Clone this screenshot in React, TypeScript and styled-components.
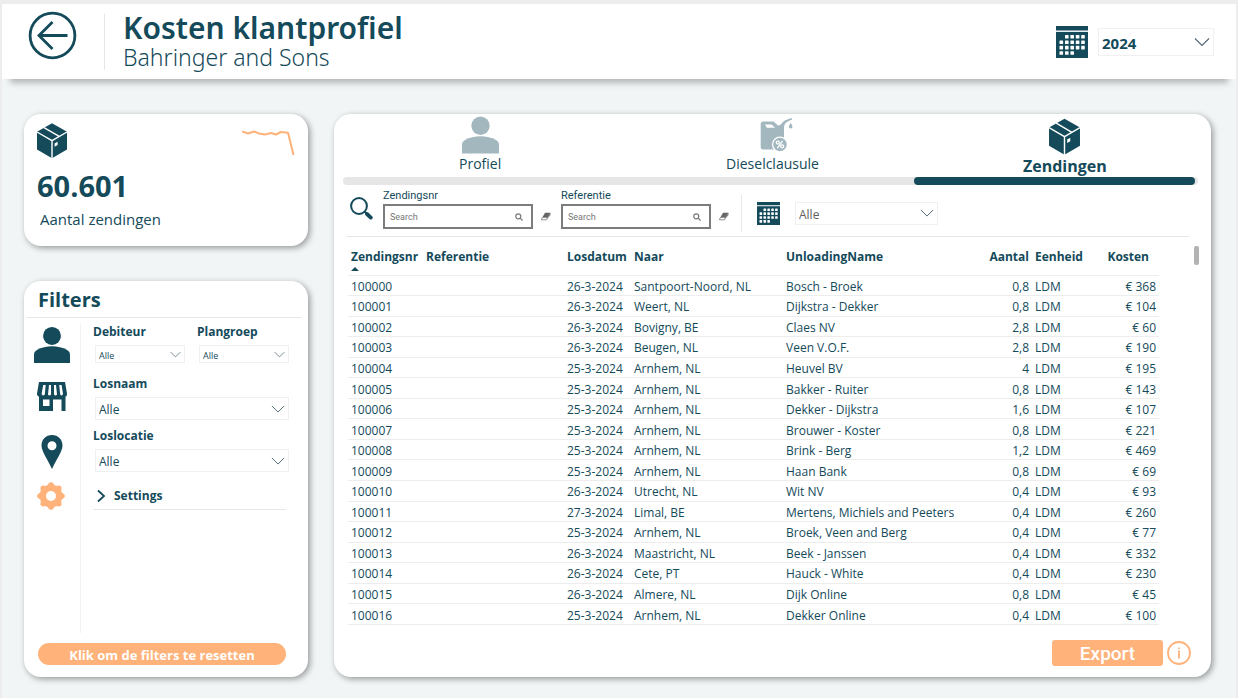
import React from "react";
import styled, { createGlobalStyle, css } from "styled-components";

const ink = "#144a5a";
const peach = "#ffb27a";
const muted = "#a3b7bf";
const line = "#e6e6e6";

const GlobalStyle = createGlobalStyle`
  *, *::before, *::after { box-sizing: border-box; }
  body {
    margin: 0;
    background: #f1f5f6;
    color: ${ink};
    font-family: "Open Sans", "Noto Sans", sans-serif;
    font-size: 12px;
  }
  button, input, select { font: inherit; color: inherit; }
  button { cursor: pointer; border: 0; padding: 0; background: none; }
  svg { display: block; flex: none; }
  h1, h2, p { margin: 0; }
`;

const Page = styled.div`
  min-height: 100vh;
  border: solid #ededed;
  border-width: 4px 2px 0;
`;

const Header = styled.header`
  display: flex;
  align-items: center;
  height: 75px;
  padding: 0 22px 0 26px;
  background: #fff;
  box-shadow: 0 12px 6px -8px rgba(0, 0, 0, 0.25);
`;

const BackButton = styled.button`
  align-self: flex-start;
  margin-top: 7px;
`;

const HeaderRule = styled.div`
  width: 1px;
  height: 56px;
  margin: 0 18px 0 27px;
  background: ${line};
`;

const Titles = styled.div`
  flex: 1;
  align-self: flex-start;
  padding-top: 6px;
`;

const Title = styled.h1`
  font-family: "Noto Sans", sans-serif;
  font-size: 30px;
  font-weight: 600;
  line-height: 36px;
`;

const Subtitle = styled.p`
  font-family: "Noto Sans", sans-serif;
  font-size: 23px;
  font-weight: 300;
  line-height: 22px;
`;

const YearPicker = styled.div`
  display: flex;
  align-items: center;
  gap: 10px;
`;

const SelectBox = styled.div<{ $w?: number; $h: number }>`
  display: grid;
  align-items: center;
  width: ${(p) => (p.$w ? `${p.$w}px` : "auto")};
  height: ${(p) => p.$h}px;
  border: 1px solid #f0f0f0;
  background: #fff;

  > * { grid-area: 1 / 1; }
  > svg { justify-self: end; margin-right: 3px; pointer-events: none; }
`;

const NativeSelect = styled.select<{ $size: number; $bold?: boolean; $grey?: boolean }>`
  appearance: none;
  width: 100%;
  height: 100%;
  border: 0;
  background: transparent;
  padding: 2px 20px 0 3px;
  font-size: ${(p) => p.$size}px;
  font-weight: ${(p) => (p.$bold ? 700 : 400)};
  ${(p) => p.$grey && css`color: #605e5c;`}
`;

const Main = styled.main`
  display: grid;
  grid-template-columns: 284px minmax(0, 1fr);
  column-gap: 26px;
  padding: 35px 25px 21px 22px;
`;

const Sidebar = styled.div`
  display: flex;
  flex-direction: column;
  gap: 35px;
`;

const Card = styled.section`
  border-radius: 17px;
  background: #fff;
  box-shadow: 2px 2px 6px rgba(0, 0, 0, 0.38);
`;

const KpiCard = styled(Card)`
  padding: 9px 12px 16px;
`;

const KpiTop = styled.div`
  display: flex;
  justify-content: space-between;
`;

const KpiValue = styled.p`
  margin-top: 8px;
  padding-left: 1px;
  font-size: 29px;
  font-weight: 700;
  line-height: 38px;
`;

const KpiLabel = styled.p`
  padding: 4px 4px 1px;
  font-size: 15px;
  line-height: 20px;
`;

const FilterCard = styled(Card)`
  display: flex;
  flex-direction: column;
  flex: 1;
  padding-bottom: 12px;
`;

const FilterTitle = styled.h2`
  margin: 0 7px 0 3px;
  padding: 6px 11px 4px;
  border-bottom: 1px solid ${line};
  font-size: 20px;
  font-weight: 700;
  line-height: 26px;
`;

const FilterBody = styled.div`
  display: flex;
  flex: 1;
  margin-top: 6px;
`;

const IconRail = styled.div`
  display: flex;
  flex-direction: column;
  align-items: center;
  width: 57px;
  padding-top: 3px;
  border-right: 1px solid #f2f2f2;
`;

const RailSlot = styled.div<{ $h: number }>`
  display: flex;
  align-items: flex-start;
  height: ${(p) => p.$h}px;
`;

const Fields = styled.div`
  flex: 1;
  padding: 0 19px 0 12px;
`;

const FieldRow = styled.div`
  display: grid;
  grid-template-columns: 1fr 1fr;
  column-gap: 12px;
`;

const Field = styled.div`
  height: 52px;

  label {
    display: block;
    font-weight: 700;
    line-height: 16px;
  }
  > div { margin: 5px 0 0 2px; }
`;

const SettingsToggle = styled.button`
  display: flex;
  align-items: center;
  gap: 8px;
  width: 100%;
  height: 30px;
  padding: 2px 0 0 4px;
  border-bottom: 1px solid ${line};
  font-weight: 700;
`;

const SettingsWrap = styled.div`
  padding-right: 3px;
`;

const ResetButton = styled.button`
  height: 22px;
  margin: 10px 22px 0 14px;
  padding-top: 1px;
  border-radius: 11px;
  background: ${peach};
  color: #fff;
  font-size: 13px;
  font-weight: 700;
`;

const Panel = styled(Card)`
  display: flex;
  flex-direction: column;
  padding-bottom: 11px;
`;

const Tabs = styled.nav`
  display: grid;
  grid-template-columns: repeat(3, 1fr);
  height: 63px;
`;

const Tab = styled.button<{ $active?: boolean }>`
  display: flex;
  flex-direction: column;
  align-items: center;
  padding-top: ${(p) => (p.$active ? 4 : 2)}px;
  line-height: 20px;
  font-size: ${(p) => (p.$active ? 16 : 14)}px;
  font-weight: ${(p) => (p.$active ? 700 : 400)};

  svg { height: 38px; }
`;

const Track = styled.div`
  height: 8px;
  margin: 0 13px 0 9px;
  padding-right: 3px;
  border-radius: 4px;
  background: ${line};
`;

const TrackThumb = styled.div`
  width: 33%;
  height: 8px;
  margin-left: auto;
  border-radius: 4px;
  background: ${ink};
`;

const SearchBar = styled.div`
  display: flex;
  align-items: center;
  height: 52px;
  margin: 0 22px 0 12px;
  padding: 5px 0 0 4px;
  border-bottom: 1px solid ${line};
`;

const SearchGroup = styled.div`
  display: flex;
  align-items: center;
  gap: 10px;
  padding-bottom: 10px;
`;

const SearchField = styled.div`
  display: flex;
  flex-direction: column;
  font-family: Roboto, sans-serif;

  label { font-size: 11px; line-height: 17px; }
`;

const InputRow = styled.div`
  display: flex;
  align-items: center;
  gap: 8px;
`;

const InputBox = styled.div`
  display: flex;
  align-items: center;
  width: 150px;
  height: 25px;
  padding: 0 8px 0 5px;
  border: 2px solid #7c7c7c;

  input {
    flex: 1;
    min-width: 0;
    padding: 0;
    border: 0;
    outline: 0;
    font-size: 9px;
  }
  input::placeholder { color: #777; }
`;

const BarRule = styled.div`
  width: 1px;
  height: 37px;
  margin: 0 15px 0 12px;
  background: ${line};
`;

const DateSelect = styled.div`
  margin-left: 15px;
`;

const TableArea = styled.div`
  display: flex;
  flex: 1;
  padding-left: 14px;
`;

const Table = styled.table`
  flex: 1;
  width: 100%;
  height: 388px;
  table-layout: fixed;
  border-collapse: collapse;

  th, td {
    padding: 0 3px;
    border-bottom: 1px solid #ededed;
    text-align: left;
    white-space: nowrap;
  }
  thead tr { height: 38px; }
  th { font-weight: 700; line-height: 16px; vertical-align: top; padding-top: 12px; }
  td { line-height: 17px; font-weight: 400; padding-top: 2px; }
`;

const NumHead = styled.th`
  && { text-align: right; }
`;

const CostHead = styled.th`
  && { text-align: right; padding-right: 10px; }
`;

const NumCell = styled.td`
  && { text-align: right; }
`;

const Gutter = styled.div`
  width: 52px;
  padding: 9px 0 0 35px;
`;

const ScrollThumb = styled.div`
  width: 5px;
  height: 19px;
  border-radius: 2px;
  background: #b3b3b3;
`;

const SortMark = styled.div`
  width: 0;
  height: 0;
  margin-top: 2px;
  border: solid transparent;
  border-width: 0 4px 4px;
  border-bottom-color: ${ink};
`;

const Footer = styled.div`
  display: flex;
  align-items: center;
  justify-content: flex-end;
  gap: 4px;
  margin-top: 15px;
  padding-right: 20px;
`;

const ExportButton = styled.button`
  width: 111px;
  height: 26px;
  border-radius: 3px;
  background: ${peach};
  color: #fff;
  font-family: Roboto, sans-serif;
  font-size: 19px;
  font-weight: 500;
`;

const Chevron = ({ size = 15, color = "#4f6675" }: { size?: number; color?: string }) => (
  <svg width={size} height={size} viewBox="0 0 16 16" fill="none" stroke={color} strokeWidth="1.1">
    <path d="M1 4.5 8 11.5 15 4.5" />
  </svg>
);

const PackageIcon = ({ size = 32 }: { size?: number }) => (
  <svg width={size} height="36" viewBox="-1 0 32 36">
    <path d="M15 .3 30 8.8V26.6L15 35.3 0 26.6V8.8Z" fill={ink} />
    <path d="M0 9 15 17.6 30 9M15 17.6V35.5M7 4.6 22.2 13.4" fill="none" stroke="#fff" strokeWidth="1.4" />
    <path d="M17.6 20.4 20.6 18.8V22L17.6 23.7Z" fill="#fff" />
  </svg>
);

const PersonIcon = ({ color = ink, size = 37 }: { color?: string; size?: number }) => (
  <svg width={size} height={size} viewBox="0 0 37 37" fill={color}>
    <circle cx="18.5" cy="9.2" r="9.2" />
    <path d="M0 37V28.5C0 26 1 24.8 3 23.6 12 18.6 25 18.6 34 23.6 36 24.8 37 26 37 28.5V37Z" />
  </svg>
);

const CalendarIcon = ({ size }: { size: number }) => (
  <svg width={size} height={size} viewBox="0 0 32 32">
    <rect width="32" height="32" fill={ink} />
    <rect y="4.5" width="32" height="1.4" fill="#fff" />
    {[9, 14.4, 19.8, 25.2].map((y, row) =>
      [3.5, 9, 14.4, 19.8, 25.2].map((x, col) =>
        (row === 0 && col === 0) || (row === 3 && col > 2) ? null : (
          <rect key={`${row}-${col}`} x={x} y={y} width="3.6" height="3.6" rx=".6" fill="#fff" />
        ),
      ),
    )}
  </svg>
);

const JerrycanIcon = () => (
  <svg width="44" height="38" viewBox="-10 0 44 38">
    <path
      d="M3.5 5.5H13.5L18 9.5C21 9.5 21.5 7 23.5 5.5 26 3.5 28.5 3 31.5 2L32.3 3.6C29.5 4.8 27 5.6 25 7.8L24 10.5V33.5H3Q.7 33.5.7 31.2V8.3Q.7 5.5 3.5 5.5Z"
      fill={muted}
    />
    <path d="M5 8.5 11.5 8.5 15.2 11.8H6.8Z" fill="#fff" />
    <path d="M30.7 7C31.6 8.5 32.5 9.7 32.5 10.8A1.8 1.8 0 0 1 28.9 10.8C28.9 9.7 29.8 8.5 30.7 7Z" fill={muted} />
    <circle cx="20" cy="28.5" r="7.4" fill={muted} stroke="#fff" strokeWidth="1.3" />
    <g fill="none" stroke="#fff" strokeWidth="1.3">
      <circle cx="17.8" cy="26.6" r="1.5" />
      <circle cx="22.2" cy="30.4" r="1.5" />
      <path d="M22.6 24.8 17.4 32.2" />
    </g>
  </svg>
);

const StoreIcon = () => (
  <svg width="30" height="29" viewBox="0 0 30 29">
    <path d="M2 0H28L30 11.5Q30 14.5 28.5 14.5V29H24.5V17.5H16V29H2V14.5Q0 14.5 0 11.5Z" fill={ink} />
    <path d="M6.2 3H8.7L7.8 12.5Q5.4 14.5 4.6 12ZM12 3H14V12.5Q12 14.5 11 12.5ZM17 3H19L20 12.5Q18.5 14.5 17 12.5ZM22.2 3H24.6L26 12Q25 14.5 23.2 12.5Z" fill="#fff" />
    <path d="M6 17.5H12.5V24H6Z" fill="#fff" />
  </svg>
);

const PinIcon = () => (
  <svg width="22" height="34" viewBox="0 0 22 34">
    <path
      fillRule="evenodd"
      fill={ink}
      d="M11 0C17 0 21.5 4.6 21.5 10.4 21.5 16.5 14.5 25.5 11 34 7.5 25.5.5 16.5.5 10.4.5 4.6 5 0 11 0ZM11 6.2A4.5 4.5 0 1 0 11 15.2 4.5 4.5 0 1 0 11 6.2Z"
    />
  </svg>
);

const GearIcon = () => (
  <svg width="30" height="28" viewBox="0 0 30 28" fill={peach}>
    <circle cx="14" cy="14" r="11.2" />
    {[0, 45, 90, 135, 180, 225, 270, 315].map((a) => (
      <path key={a} d="M9.8 4 12.4 .6Q14-.3 15.6.6L18.2 4Z" transform={`rotate(${a} 14 14)`} />
    ))}
    <circle cx="14" cy="14" r="5" fill="#fff" />
  </svg>
);

const MagnifierIcon = () => (
  <svg width="23" height="23" viewBox="0 0 23 23" fill="none" stroke={ink}>
    <circle cx="9" cy="9" r="7.9" strokeWidth="2" />
    <path d="M14.8 14.8 17 17" strokeWidth="2" />
    <path d="M17 17 20.8 20.6" strokeWidth="3.8" strokeLinecap="round" />
  </svg>
);

const SmallMagnifier = () => (
  <svg width="8" height="8" viewBox="0 0 8 8" fill="none" stroke="#777" strokeWidth="1.2">
    <circle cx="3.3" cy="3.3" r="2.5" />
    <path d="M5.2 5.2 7.5 7.5" />
  </svg>
);

const EraserIcon = () => (
  <svg width="10" height="9" viewBox="0 0 10 9">
    <path d="M4 .7H9.5L6.8 5.4H1.4Z" fill="#666" />
    <path d="M1.4 5.4H6.5L5.4 7.8H.4Z" fill="#fff" stroke="#777" strokeWidth=".8" />
    <path d="M9.5.7V3L5.4 8 6.8 5.4Z" fill="#777" />
  </svg>
);

interface DropDownProps {
  id: string;
  value: string;
  height: number;
  width?: number;
  size?: number;
  bold?: boolean;
  grey?: boolean;
  chevron?: number;
  label?: string;
}

const DropDown = ({ id, value, height, width, size = 12, bold, grey, chevron, label }: DropDownProps) => (
  <SelectBox $w={width} $h={height}>
    <NativeSelect id={id} aria-label={label} $size={size} $bold={bold} $grey={grey}>
      <option>{value}</option>
    </NativeSelect>
    <Chevron size={chevron} />
  </SelectBox>
);

const SearchInput = ({ id, label }: { id: string; label: string }) => (
  <SearchField>
    <label htmlFor={id}>{label}</label>
    <InputRow>
      <InputBox>
        <input id={id} placeholder="Search" />
        <SmallMagnifier />
      </InputBox>
      <button aria-label={`${label} wissen`}>
        <EraserIcon />
      </button>
    </InputRow>
  </SearchField>
);

type Shipment = [date: string, to: string, name: string, amount: string, cost: string];

const shipments: Shipment[] = [
  ["26-3-2024", "Santpoort-Noord, NL", "Bosch - Broek", "0,8", "368"],
  ["26-3-2024", "Weert, NL", "Dijkstra - Dekker", "0,8", "104"],
  ["26-3-2024", "Bovigny, BE", "Claes NV", "2,8", "60"],
  ["26-3-2024", "Beugen, NL", "Veen V.O.F.", "2,8", "190"],
  ["25-3-2024", "Arnhem, NL", "Heuvel BV", "4", "195"],
  ["25-3-2024", "Arnhem, NL", "Bakker - Ruiter", "0,8", "143"],
  ["25-3-2024", "Arnhem, NL", "Dekker - Dijkstra", "1,6", "107"],
  ["25-3-2024", "Arnhem, NL", "Brouwer - Koster", "0,8", "221"],
  ["25-3-2024", "Arnhem, NL", "Brink - Berg", "1,2", "469"],
  ["25-3-2024", "Arnhem, NL", "Haan Bank", "0,8", "69"],
  ["26-3-2024", "Utrecht, NL", "Wit NV", "0,4", "93"],
  ["27-3-2024", "Limal, BE", "Mertens, Michiels and Peeters", "0,4", "260"],
  ["25-3-2024", "Arnhem, NL", "Broek, Veen and Berg", "0,4", "77"],
  ["26-3-2024", "Maastricht, NL", "Beek - Janssen", "0,4", "332"],
  ["26-3-2024", "Cete, PT", "Hauck - White", "0,4", "230"],
  ["26-3-2024", "Almere, NL", "Dijk Online", "0,8", "45"],
  ["25-3-2024", "Arnhem, NL", "Dekker Online", "0,4", "100"],
];

const columnWidths = [75, 141, 67, 152, undefined, 52, 70, 57];

export default function App() {
  return (
    <>
      <GlobalStyle />
      <Page>
        <Header>
          <BackButton aria-label="Terug">
            <svg width="49" height="49" viewBox="0 0 49 49" fill="none" stroke={ink}>
              <circle cx="24.5" cy="24.5" r="22.4" strokeWidth="2.8" />
              <path d="M39.5 24.5H11M24.5 11 11 24.5 24.5 38" strokeWidth="2.8" />
            </svg>
          </BackButton>
          <HeaderRule />
          <Titles>
            <Title>Kosten klantprofiel</Title>
            <Subtitle>Bahringer and Sons</Subtitle>
          </Titles>
          <YearPicker>
            <CalendarIcon size={32} />
            <DropDown id="year" label="Jaar" value="2024" width={116} height={28} size={15} bold chevron={16} />
          </YearPicker>
        </Header>

        <Main>
          <Sidebar>
            <KpiCard>
              <KpiTop>
                <PackageIcon />
                <svg width="54" height="34" viewBox="0 0 54 34" fill="none" stroke={peach} strokeWidth="2">
                  <path d="M0 8.500 6 10.500 12 8.500 17 10.500 23 11.500 29 10 34 11.500 39 9 46 9.700 51.500 32" strokeLinejoin="round" />
                </svg>
              </KpiTop>
              <KpiValue>60.601</KpiValue>
              <KpiLabel>Aantal zendingen</KpiLabel>
            </KpiCard>

            <FilterCard>
              <FilterTitle>Filters</FilterTitle>
              <FilterBody>
                <IconRail>
                  <RailSlot $h={55}><PersonIcon size={36} /></RailSlot>
                  <RailSlot $h={53}><StoreIcon /></RailSlot>
                  <RailSlot $h={47}><PinIcon /></RailSlot>
                  <RailSlot $h={28}><GearIcon /></RailSlot>
                </IconRail>
                <Fields>
                  <FieldRow>
                    <Field>
                      <label htmlFor="debiteur">Debiteur</label>
                      <DropDown id="debiteur" value="Alle" height={18} size={9} chevron={11} />
                    </Field>
                    <Field>
                      <label htmlFor="plangroep">Plangroep</label>
                      <DropDown id="plangroep" value="Alle" height={18} size={9} chevron={11} />
                    </Field>
                  </FieldRow>
                  <Field>
                    <label htmlFor="losnaam">Losnaam</label>
                    <DropDown id="losnaam" value="Alle" height={23} chevron={14} />
                  </Field>
                  <Field>
                    <label htmlFor="loslocatie">Loslocatie</label>
                    <DropDown id="loslocatie" value="Alle" height={23} chevron={14} />
                  </Field>
                  <SettingsWrap>
                    <SettingsToggle>
                      <svg width="9" height="14" viewBox="0 0 9 14" fill="none" stroke={ink} strokeWidth="1.8">
                        <path d="M1 1.5 7 7 1 12.5" />
                      </svg>
                      Settings
                    </SettingsToggle>
                  </SettingsWrap>
                </Fields>
              </FilterBody>
              <ResetButton>Klik om de filters te resetten</ResetButton>
            </FilterCard>
          </Sidebar>

          <Panel>
            <Tabs>
              <Tab><PersonIcon color={muted} />Profiel</Tab>
              <Tab><JerrycanIcon />Dieselclausule</Tab>
              <Tab $active><PackageIcon size={33} />Zendingen</Tab>
            </Tabs>
            <Track><TrackThumb /></Track>
            <SearchBar>
              <SearchGroup>
                <MagnifierIcon />
                <SearchInput id="zendingsnr" label="Zendingsnr" />
                <SearchInput id="referentie" label="Referentie" />
              </SearchGroup>
              <BarRule />
              <CalendarIcon size={23} />
              <DateSelect>
                <DropDown id="periode" label="Periode" value="Alle" width={143} height={23} grey chevron={14} />
              </DateSelect>
            </SearchBar>
            <TableArea>
              <Table>
                <colgroup>
                  {columnWidths.map((w, i) => (
                    <col key={i} width={w} />
                  ))}
                </colgroup>
                <thead>
                  <tr>
                    <th>Zendingsnr<SortMark /></th>
                    <th>Referentie</th>
                    <th>Losdatum</th>
                    <th>Naar</th>
                    <th>UnloadingName</th>
                    <NumHead>Aantal</NumHead>
                    <th>Eenheid</th>
                    <CostHead>Kosten</CostHead>
                  </tr>
                </thead>
                <tbody>
                  {shipments.map(([date, to, name, amount, cost], i) => (
                    <tr key={i}>
                      <td>{100000 + i}</td>
                      <td />
                      <td>{date}</td>
                      <td>{to}</td>
                      <td>{name}</td>
                      <NumCell>{amount}</NumCell>
                      <td>LDM</td>
                      <NumCell>€ {cost}</NumCell>
                    </tr>
                  ))}
                </tbody>
              </Table>
              <Gutter><ScrollThumb /></Gutter>
            </TableArea>
            <Footer>
              <ExportButton>Export</ExportButton>
              <button aria-label="Informatie">
                <svg width="24" height="26" viewBox="0 0 24 26" fill="none" stroke={peach} strokeWidth="1.8">
                  <circle cx="12" cy="13" r="11" />
                  <path d="M12 10.5V18.5M12 7.5V9" />
                </svg>
              </button>
            </Footer>
          </Panel>
        </Main>
      </Page>
    </>
  );
}
